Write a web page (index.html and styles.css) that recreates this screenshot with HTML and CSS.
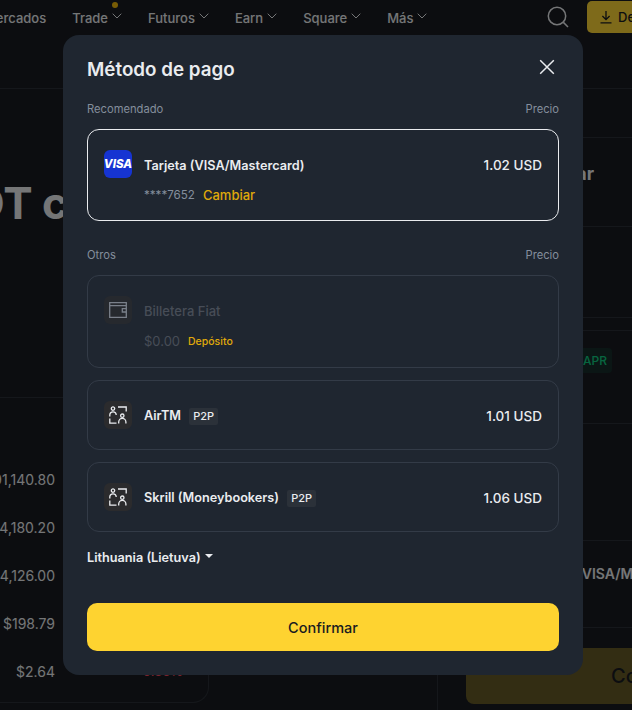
FILE: index.html
```html
<!DOCTYPE html>
<html>

<head>
  <meta charset="utf-8">
  <title>Método de pago</title>
  <link rel="stylesheet" href="styles.css">
</head>

<body>
  <div class="page">
    <header class="topbar">
      <nav class="nav">
        <a class="nav-item">Mercados</a>
        <a class="nav-item">Trade
          <svg class="chev" viewBox="0 0 10 6"><path d="M.7.7 5 5 9.3.7" /></svg>
          <span class="nav-dot"></span>
        </a>
        <a class="nav-item">Futuros <svg class="chev" viewBox="0 0 10 6"><path d="M.7.7 5 5 9.3.7" /></svg></a>
        <a class="nav-item">Earn <svg class="chev" viewBox="0 0 10 6"><path d="M.7.7 5 5 9.3.7" /></svg></a>
        <a class="nav-item">Square <svg class="chev" viewBox="0 0 10 6"><path d="M.7.7 5 5 9.3.7" /></svg></a>
        <a class="nav-item">Más <svg class="chev" viewBox="0 0 10 6"><path d="M.7.7 5 5 9.3.7" /></svg></a>
      </nav>
      <svg class="search-icon" viewBox="0 0 24 24"><circle cx="11" cy="11" r="8.7" /><path d="M17.4 17.4 22 22" /></svg>
      <div class="deposit-btn">
        <svg class="deposit-icon" viewBox="0 0 14 14"><path d="M7 1v8.5M3.4 6 7 9.6 10.6 6M1.5 12.8h11" /></svg>
        <span>Depositar</span>
      </div>
    </header>

    <main class="content">
      <section class="left-col">
        <div class="hero">DOT con</div>
        <div class="market-box">
          <div class="market-row"><span class="market-price">$91,140.80</span><span class="market-change"></span></div>
          <div class="market-row"><span class="market-price">$4,180.20</span><span class="market-change"></span></div>
          <div class="market-row"><span class="market-price">$4,126.00</span><span class="market-change"></span></div>
          <div class="market-row"><span class="market-price">$198.79</span><span class="market-change"></span></div>
          <div class="market-row"><span class="market-price">$2.64</span><span class="market-change">-0.36%</span></div>
        </div>
      </section>

      <section class="right-col">
        <div class="side-row row-a"></div>
        <div class="side-row row-b"><span class="side-title">Comprar</span></div>
        <div class="side-row row-c"></div>
        <div class="side-row row-d"></div>
        <div class="side-row row-e"><span class="apr-tag">APR</span></div>
        <div class="side-row row-f"></div>
        <div class="side-row row-g"><span class="side-method">Tarjeta (VISA/Mastercard)</span></div>
        <div class="buy-btn">Comprar</div>
      </section>
    </main>
  </div>

  <div class="overlay">
    <div class="modal">
      <div class="modal-head">
        <h2 class="modal-title">Método de pago</h2>
        <svg class="close-icon" viewBox="0 0 24 24"><path d="M5.2 5.2 18.8 18.8M18.8 5.2 5.2 18.8" /></svg>
      </div>

      <div class="section-head first">
        <span>Recomendado</span>
        <span>Precio</span>
      </div>
      <div class="pay-card selected">
        <div class="pay-icon visa">VISA</div>
        <div class="pay-body">
          <div class="pay-line">
            <span class="pay-name">Tarjeta (VISA/Mastercard)</span>
            <span class="pay-price">1.02 USD</span>
          </div>
          <div class="pay-sub">
            <span class="muted">****7652</span>
            <span class="link">Cambiar</span>
          </div>
        </div>
      </div>

      <div class="section-head">
        <span>Otros</span>
        <span>Precio</span>
      </div>
      <div class="pay-card tall">
        <div class="pay-icon dim">
          <svg class="wallet-icon" viewBox="0 0 18 16">
            <path d="M.7.7h16.6v14.6H.7zM.7 3.6h16.6" />
            <path d="M17.3 6.6h-4v3.4h4" />
          </svg>
        </div>
        <div class="pay-body">
          <div class="pay-line">
            <span class="pay-name disabled">Billetera Fiat</span>
          </div>
          <div class="pay-sub">
            <span class="disabled balance">$0.00</span>
            <span class="link small">Depósito</span>
          </div>
        </div>
      </div>

      <div class="pay-card">
        <div class="pay-icon">
          <svg class="p2p-icon" viewBox="0 0 18 18">
            <circle cx="4" cy="2.6" r="1.7" />
            <circle cx="13.3" cy="9.7" r="1.7" />
            <path d="M.8 10.6V9a3.2 3.2 0 0 1 6.4 0M.8 12.6v4.6h6.7M9 1h8.2v4.6M9.7 17.6V16a3.6 3.6 0 0 1 7.2 0v1.6" />
          </svg>
        </div>
        <div class="pay-body">
          <div class="pay-line">
            <span class="pay-name">AirTM <span class="p2p-tag">P2P</span></span>
            <span class="pay-price">1.01 USD</span>
          </div>
        </div>
      </div>

      <div class="pay-card">
        <div class="pay-icon">
          <svg class="p2p-icon" viewBox="0 0 18 18">
            <circle cx="4" cy="2.6" r="1.7" />
            <circle cx="13.3" cy="9.7" r="1.7" />
            <path d="M.8 10.6V9a3.2 3.2 0 0 1 6.4 0M.8 12.6v4.6h6.7M9 1h8.2v4.6M9.7 17.6V16a3.6 3.6 0 0 1 7.2 0v1.6" />
          </svg>
        </div>
        <div class="pay-body">
          <div class="pay-line">
            <span class="pay-name">Skrill (Moneybookers) <span class="p2p-tag">P2P</span></span>
            <span class="pay-price">1.06 USD</span>
          </div>
        </div>
      </div>

      <div class="country">Lithuania (Lietuva) <span class="caret"></span></div>

      <button class="confirm-btn">Confirmar</button>
    </div>
  </div>
</body>

</html>
```

FILE: styles.css
```css
* {
  box-sizing: border-box;
}

html,
body {
  margin: 0;
  height: 100%;
  overflow: hidden;
}

body {
  background-color: #181b21;
  color: #eaecef;
  font-family: "Inter", "Liberation Sans", Arial, sans-serif;
}

.page {
  width: 632px;
  height: 710px;
  overflow: hidden;
}

/* --- Top bar --- */
.topbar {
  display: flex;
  align-items: flex-start;
  height: 89px;
  border-bottom: 1px solid #2b2f36;
}

.nav {
  display: flex;
  gap: 26px;
  margin-left: -16px;
  height: 36px;
  align-items: center;
  font-size: 13px;
  font-weight: 500;
  color: #eaecef;
  white-space: nowrap;
}

.nav-item {
  position: relative;
  display: flex;
  align-items: center;
  gap: 4px;
}

.chev {
  width: 10px;
  height: 6px;
  margin-top: -4px;
  fill: none;
  stroke: #eaecef;
  stroke-width: 1;
}

.nav-dot {
  position: absolute;
  top: -8px;
  right: 4px;
  width: 6px;
  height: 6px;
  border-radius: 50%;
  background: #f0b90b;
}

.search-icon {
  width: 24px;
  height: 24px;
  margin: 5px 17px 0 auto;
  fill: none;
  stroke: #eaecef;
  stroke-width: 1.5;
  flex-shrink: 0;
}

.deposit-btn {
  display: flex;
  align-items: center;
  gap: 5px;
  flex-shrink: 0;
  width: 45px;
  height: 32px;
  margin-top: 1px;
  padding-left: 12px;
  border-radius: 5px 0 0 5px;
  background: #fcd535;
  color: #181a20;
  font-size: 13px;
  font-weight: 500;
  overflow: hidden;
  white-space: nowrap;
}

.deposit-icon {
  width: 14px;
  height: 14px;
  flex-shrink: 0;
  fill: none;
  stroke: #181a20;
  stroke-width: 1.3;
}

/* --- Page behind the dialog --- */
.content {
  display: flex;
  height: 621px;
}

.left-col {
  width: 438px;
  border-right: 1px solid #2b2f36;
  flex-shrink: 0;
}

.hero {
  height: 309px;
  padding-top: 85px;
  margin-left: -61px;
  border-bottom: 1px solid #2b2f36;
  font-size: 44px;
  line-height: 58px;
  font-weight: 700;
  word-spacing: -1px;
  white-space: nowrap;
}

.market-box {
  width: 209px;
  height: 305px;
  padding-top: 57px;
  border-right: 1px solid #2b2f36;
  border-bottom: 1px solid #2b2f36;
  border-bottom-right-radius: 16px;
}

.market-row {
  display: flex;
  align-items: center;
  height: 48px;
  font-size: 14px;
}

.market-price {
  display: flex;
  justify-content: flex-end;
  width: 55px;
  white-space: nowrap;
}

.market-change {
  width: 128px;
  font-size: 13px;
  text-align: right;
  color: #f6465d;
}

.right-col {
  flex: 1;
  min-width: 0;
  overflow: hidden;
}

.side-row {
  border-bottom: 1px solid #2b2f36;
  white-space: nowrap;
}

.row-a { height: 49px; }
.row-b { height: 89px; padding: 23px 0 0 79px; }
.row-c { height: 91px; }
.row-d { height: 13px; }
.row-e { height: 93px; padding: 17px 0 0 140px; }
.row-f { height: 117px; }
.row-g { height: 87px; padding: 22px 0 0 88px; }

.side-title {
  font-size: 18px;
  line-height: 26px;
  font-weight: 700;
}

.side-method {
  font-size: 14px;
  line-height: 20px;
  font-weight: 600;
}

.apr-tag {
  display: inline-block;
  padding: 0 5px;
  height: 25px;
  line-height: 25px;
  border-radius: 4px;
  background: rgba(14, 203, 129, 0.1);
  color: #0ecb81;
  font-size: 12px;
  font-weight: 500;
}

.buy-btn {
  margin: 20px 0 0 28px;
  width: 260px;
  height: 56px;
  line-height: 56px;
  padding-left: 145px;
  border-radius: 8px;
  background: rgba(252, 213, 53, 0.35);
  color: #181a20;
  font-size: 20px;
  font-weight: 500;
  white-space: nowrap;
}

/* --- Dialog --- */
.overlay {
  position: fixed;
  top: 0;
  left: 0;
  width: 632px;
  height: 710px;
  padding-left: 14px;
  display: flex;
  align-items: center;
  justify-content: center;
  background: rgba(0, 0, 0, 0.5);
}

.modal {
  width: 520px;
  padding: 20px 24px 24px;
  border-radius: 16px;
  background: #1f2630;
}

.modal-head {
  display: flex;
  justify-content: space-between;
  align-items: flex-start;
  height: 28px;
}

.modal-title {
  margin: 0;
  padding-top: 1px;
  font-size: 18.8px;
  line-height: 28px;
  font-weight: 600;
  color: #eaecef;
}

.close-icon {
  width: 24px;
  height: 24px;
  fill: none;
  stroke: #eaecef;
  stroke-width: 1.5;
}

.section-head {
  display: flex;
  justify-content: space-between;
  margin: 26px 0 12px;
  font-size: 11.2px;
  line-height: 16px;
  color: #848e9c;
}

.section-head.first {
  margin-top: 18px;
}

.pay-card {
  display: flex;
  gap: 12px;
  padding: 20px 16px;
  margin-bottom: 12px;
  border: 1px solid #333b47;
  border-radius: 12px;
}

.pay-card.selected {
  height: 92px;
  margin-bottom: 0;
  border-color: #eaecef;
}

.pay-card.tall {
  height: 93px;
}

.pay-icon {
  display: flex;
  align-items: center;
  justify-content: center;
  width: 28px;
  height: 28px;
  flex-shrink: 0;
  border-radius: 6px;
  background: #2b2b2d;
}

.pay-icon.visa {
  background: #1634d2;
  color: #fff;
  font-size: 11.5px;
  font-weight: 800;
  font-style: italic;
}

.pay-icon.dim {
  opacity: 0.6;
}

.p2p-icon,
.wallet-icon {
  fill: none;
  stroke: #eaecef;
  stroke-width: 1.3;
}

.p2p-icon {
  width: 18px;
  height: 18px;
}

.wallet-icon {
  width: 18px;
  height: 16px;
  stroke: #b7bdc6;
}

.pay-body {
  flex: 1;
  min-width: 0;
}

.pay-line {
  display: flex;
  align-items: center;
  justify-content: space-between;
  height: 28px;
  padding-top: 2px;
}

.pay-name {
  font-size: 12.7px;
  font-weight: 600;
  color: #eaecef;
}

.pay-name.disabled {
  font-size: 13px;
  font-weight: 500;
  color: #474d57;
}

.pay-price {
  font-size: 13.5px;
  font-weight: 500;
  color: #eaecef;
}

.p2p-tag {
  display: inline-block;
  margin-left: 5px;
  padding: 0 4px;
  line-height: 17px;
  border-radius: 2px;
  background: #2b3139;
  font-size: 11px;
  font-weight: 500;
}

.pay-sub {
  display: flex;
  align-items: center;
  gap: 8px;
  height: 20px;
  margin-top: 7px;
  font-size: 13px;
}

.muted {
  color: #848e9c;
  font-size: 11.6px;
}

.disabled {
  color: #474d57;
}

.balance {
  font-size: 13px;
}

.link {
  color: #e0aa0a;
  font-weight: 500;
}

.link.small {
  font-size: 10.5px;
}

.country {
  display: flex;
  align-items: center;
  gap: 4px;
  height: 20px;
  margin-top: 15px;
  font-size: 12.7px;
  font-weight: 600;
}

.caret {
  width: 0;
  height: 0;
  margin-top: -2px;
  border-left: 4px solid transparent;
  border-right: 4px solid transparent;
  border-top: 4px solid #eaecef;
}

.confirm-btn {
  display: block;
  width: 100%;
  height: 48px;
  margin-top: 36px;
  border: none;
  border-radius: 10px;
  background: #fed330;
  color: #181a20;
  font-family: inherit;
  font-size: 14.5px;
  font-weight: 500;
}
```
